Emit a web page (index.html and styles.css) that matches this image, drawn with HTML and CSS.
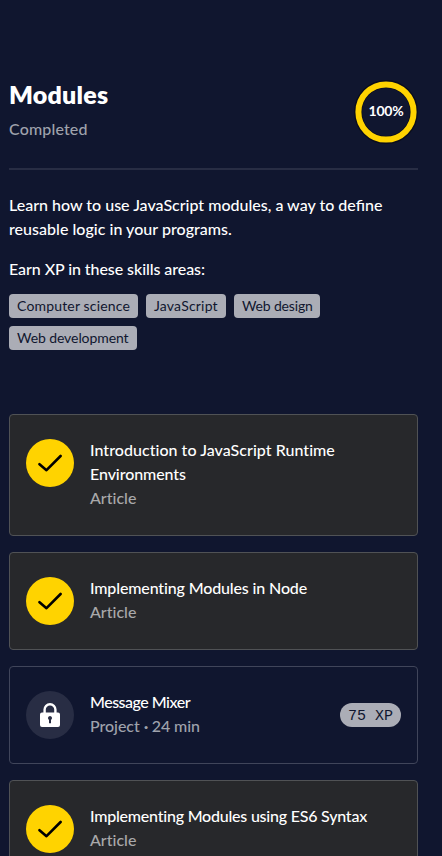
FILE: index.html
```html
<!DOCTYPE html>
<html lang="en">
<head>
<meta charset="utf-8">
<title>Modules</title>
<link rel="stylesheet" href="styles.css">
</head>
<body>
<svg class="defs" aria-hidden="true">
  <symbol id="check" viewBox="0 0 24 24"><path d="M1.5 13.2 8.5 19.2 22.6 5" fill="none" stroke="#000" stroke-width="2.6" stroke-linecap="round" stroke-linejoin="round"/></symbol>
</svg>
<main class="page">
  <header class="header">
    <div>
      <h1 class="title">Modules</h1>
      <p class="status">Completed</p>
    </div>
    <div class="progress">
      <svg class="ring" viewBox="0 0 64 64"><circle class="ring-track" cx="32" cy="32" r="28"/><circle class="ring-value" cx="32" cy="32" r="27.6"/></svg>
      <span class="percent">100%</span>
    </div>
  </header>
  <section class="intro">
    <p class="description">Learn how to use JavaScript modules, a way to define<br><span class="d2">reusable logic in your programs.</span></p>
    <p class="skills-label">Earn XP in these skills areas:</p>
    <ul class="tags">
      <li class="tag t1">Computer science</li>
      <li class="tag t2">JavaScript</li>
      <li class="tag t3">Web design</li>
      <li class="tag t4">Web development</li>
    </ul>
  </section>
  <section class="cards">
    <article class="card">
      <div class="badge"><svg class="icon"><use href="#check"/></svg></div>
      <div class="body"><h2 class="name"><span class="n1">Introduction to JavaScript Runtime</span><br><span class="n2">Environments</span></h2><p class="kind">Article</p></div>
    </article>
    <article class="card">
      <div class="badge"><svg class="icon"><use href="#check"/></svg></div>
      <div class="body"><h2 class="name n3">Implementing Modules in Node</h2><p class="kind">Article</p></div>
    </article>
    <article class="card locked">
      <div class="badge"><svg class="icon" viewBox="0 0 24 24"><path d="M6.600 10V6.600a5.400 5.400 0 0 1 10.800 0V10" fill="none" stroke="#fff" stroke-width="2.400"/><path fill="#fff" fill-rule="evenodd" d="M4 9.500h16a2 2 0 0 1 2 2V22a2 2 0 0 1-2 2H4a2 2 0 0 1-2-2V11.500a2 2 0 0 1 2-2ZM12 13a2.100 2.100 0 0 0-1 3.900V20.200h2V16.900A2.100 2.100 0 0 0 12 13Z"/></svg></div>
      <div class="body"><h2 class="name n4">Message Mixer</h2><p class="kind">Project <span class="dot">•</span> 24 min</p></div>
      <span class="xp">75 XP</span>
    </article>
    <article class="card">
      <div class="badge"><svg class="icon"><use href="#check"/></svg></div>
      <div class="body"><h2 class="name n5">Implementing Modules using ES6 Syntax</h2><p class="kind">Article</p></div>
    </article>
  </section>
</main>
</body>
</html>
```
FILE: styles.css
```css
* { box-sizing: border-box; margin: 0; padding: 0; }
body {
  height: 856px;
  overflow: hidden;
  background: #10162f;
  color: #fff;
  font: 500 16px/24px Lato, "Liberation Sans", sans-serif;
  white-space: nowrap;
}
.defs { display: none; }
.page { padding: 76px 24px 0 9px; }
.header {
  display: flex;
  justify-content: space-between;
  height: 94px;
  border-bottom: 2px solid #282d44;
}
.title { font-size: 25px; font-weight: 800; line-height: 36px; letter-spacing: 0.2px; }
.status { margin-top: 5px; color: #9fa2ac; letter-spacing: 0.15px; }
.progress { display: grid; place-items: center; width: 64px; height: 64px; margin: 4px 0 0; }
.ring, .percent { grid-area: 1 / 1; }
.ring { width: 64px; height: 64px; }
.ring circle { fill: none; }
.ring-track { stroke: #0a0d1c; stroke-width: 8px; }
.ring-value { stroke: #ffd300; stroke-width: 6px; }
.percent { padding-bottom: 2px; font-size: 14px; font-weight: 700; letter-spacing: -0.2px; }
.intro { padding-top: 23px; height: 244px; }
.d2 { letter-spacing: 0.03px; }
.skills-label { margin: 16px 0 13px; letter-spacing: -0.07px; }
.tags { display: flex; flex-wrap: wrap; gap: 8px; list-style: none; }
.tag {
  height: 24px;
  padding: 0 8px;
  border-radius: 4px;
  background: #abadb6;
  color: #10162f;
  font-size: 14px;
  font-weight: 400;
}
.t1 { width: 129px; letter-spacing: 0.17px; }
.t2 { width: 80px; letter-spacing: 0.2px; }
.t3 { width: 86px; letter-spacing: -0.15px; }
.t4 { width: 128px; letter-spacing: -0.08px; }
.cards { display: flex; flex-direction: column; gap: 16px; }
.card {
  display: flex;
  gap: 16px;
  padding: 24px 16px;
  border: 1px solid #505255;
  border-radius: 4px;
  background: #27282b;
}
.badge {
  display: grid;
  place-items: center;
  flex: none;
  width: 48px;
  height: 48px;
  border-radius: 50%;
  background: #ffd300;
}
.icon { width: 24px; height: 24px; }
.body { flex: 1; margin: -1px 0 1px; }
.name { font: inherit; font-variant-ligatures: none; }
.n1 { letter-spacing: 0.04px; }
.n2 { letter-spacing: -0.08px; }
.n3 { letter-spacing: -0.14px; }
.n4 { letter-spacing: -0.5px; }
.n5 { letter-spacing: -0.22px; }
.kind { color: #a9a9aa; font-variant-ligatures: none; }
.dot { display: inline-block; width: 4px; font-size: 8px; line-height: 8px; vertical-align: 2px; }
.locked { background: transparent; border-color: #40455a; }
.locked .badge { background: #282d44; }
.locked .kind { color: #9fa2ac; letter-spacing: -0.05px; }
.xp {
  align-self: center;
  width: 61px;
  height: 24px;
  padding-top: 1px;
  border-radius: 12px;
  background: #abadb6;
  color: #10162f;
  font: 400 15px/25px "Liberation Mono", monospace;
  text-align: center;
}
```
